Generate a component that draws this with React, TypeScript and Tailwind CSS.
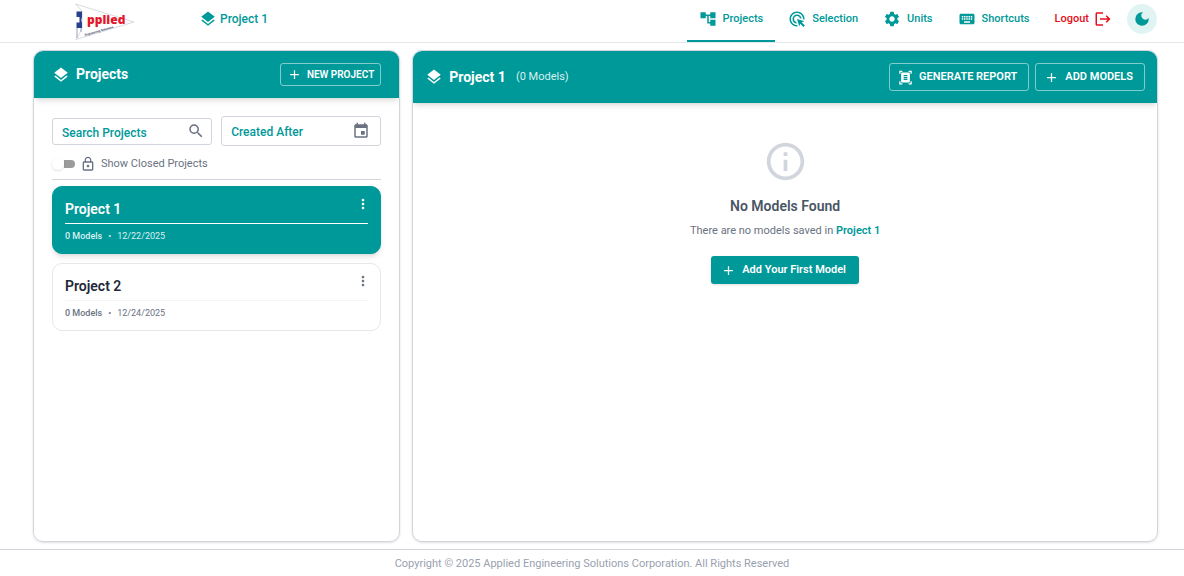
import { useState } from 'react';
import type { IconType } from 'react-icons';
import {
  MdAccountTree,
  MdAdd,
  MdAdsClick,
  MdDarkMode,
  MdDocumentScanner,
  MdEvent,
  MdInfoOutline,
  MdKeyboard,
  MdLayers,
  MdLockOutline,
  MdLogout,
  MdMoreVert,
  MdSearch,
  MdSettings,
} from 'react-icons/md';

interface Project {
  id: number;
  name: string;
  models: number;
  createdOn: string;
}

const projects: Project[] = [
  { id: 1, name: 'Project 1', models: 0, createdOn: '12/22/2025' },
  { id: 2, name: 'Project 2', models: 0, createdOn: '12/24/2025' },
];

const navItems: { label: string; icon: IconType }[] = [
  { label: 'Projects', icon: MdAccountTree },
  { label: 'Selection', icon: MdAdsClick },
  { label: 'Units', icon: MdSettings },
  { label: 'Shortcuts', icon: MdKeyboard },
];

function Logo() {
  return (
    <svg viewBox="0 0 60 38" className="h-[38px] w-[60px]" role="img" aria-label="Applied">
      <path d="M0.5 2 L59 20 L1 37.5 L7 27 L7 9 Z" fill="none" stroke="#cfd0d4" strokeWidth="0.8" />
      <path d="M2 26v10M6 26v4" stroke="#9aa3bd" strokeWidth="1" />
      <path d="M1.5 9.5h5.500v5.500q-1.500 3 0 6v5h-5.500v-5.500h3v-5.500h-3z" fill="#27408b" />
      <text x="12" y="22" fontSize="12" className="fill-[#e3172a] font-['Open_Sans',sans-serif] font-extrabold">
        pplied
      </text>
      <text x="10" y="34" fontSize="3" transform="rotate(-16 10 34)" className="fill-[#3d4668] font-['Roboto',sans-serif] font-bold">
        Engineering Solutions
      </text>
    </svg>
  );
}

function Header() {
  return (
    <header className="flex h-[43px] shrink-0 items-center border-b border-gray-200 pr-[27px] pl-[75px]">
      <Logo />
      <div className="ml-16 flex items-center gap-[3px] pb-1 text-[12px] font-medium text-[#009999]">
        <MdLayers size={18} />
        Project 1
      </div>
      <nav className="ml-auto flex h-full gap-px text-[11px] font-medium">
        {navItems.map(({ label, icon: Icon }) => (
          <a
            key={label}
            href="#"
            className={`flex h-[42px] items-center gap-1.5 border-b-2 px-3 pb-0.5 text-[#009999] ${
              label === 'Projects' ? 'border-[#009999]' : 'border-transparent'
            }`}
          >
            <Icon size={18} />
            {label}
          </a>
        ))}
        <button type="button" className="flex h-[42px] items-center gap-[5px] px-3 pb-1 text-[#e3101c]">
          Logout
          <MdLogout size={18} />
        </button>
      </nav>
      <button
        type="button"
        aria-label="Toggle dark mode"
        className="mb-1 ml-[3px] flex size-[30px] items-center justify-center rounded-full bg-[#e0f4f4] text-[#009999]"
      >
        <MdDarkMode size={18} />
      </button>
    </header>
  );
}

interface ProjectCardProps {
  project: Project;
  selected: boolean;
  onSelect: () => void;
}

function ProjectCard({ project, selected, onSelect }: ProjectCardProps) {
  return (
    <li
      onClick={onSelect}
      className={`h-[68px] rounded-[10px] border px-3 pt-3 ${
        selected ? 'border-[#009999] bg-[#009999] text-white shadow-md' : 'border-gray-200 bg-white text-gray-800'
      }`}
    >
      <div
        className={`flex h-[25px] items-start justify-between border-b ${
          selected ? 'border-white' : 'border-gray-100'
        }`}
      >
        <h3 className="text-[14px] leading-[20px] font-semibold">{project.name}</h3>
        <button
          type="button"
          aria-label={`${project.name} menu`}
          className={`-mt-[3px] -mr-[3px] ${selected ? 'text-white' : 'text-gray-500'}`}
        >
          <MdMoreVert size={16} />
        </button>
      </div>
      <p
        className={`flex gap-1.5 pt-[5px] text-[9px] leading-[14px] ${
          selected ? 'text-[#d9f0f0]' : 'text-gray-500'
        }`}
      >
        <span className="font-medium">{project.models} Models</span>
        <span>•</span>
        <span>{project.createdOn}</span>
      </p>
    </li>
  );
}

function ProjectsPanel({ selectedId, onSelect }: { selectedId: number; onSelect: (id: number) => void }) {
  const [search, setSearch] = useState('');
  const [createdAfter, setCreatedAfter] = useState('');
  const [showClosed, setShowClosed] = useState(false);

  return (
    <section className="flex flex-col overflow-hidden rounded-[10px] border border-gray-300 shadow-sm">
      <div className="flex h-[47px] shrink-0 items-center justify-between bg-[#009999] px-[18px] text-white shadow-md">
        <h2 className="flex items-center gap-1.5 text-[14px] font-bold">
          <MdLayers size={18} />
          Projects
        </h2>
        <button
          type="button"
          className="flex h-[23px] items-center gap-[5px] rounded-[3px] border border-white/50 px-1.5 text-[10px] font-semibold"
        >
          <MdAdd size={15} />
          NEW PROJECT
        </button>
      </div>

      <div className="px-[18px] pt-[18px]">
        <div className="grid grid-cols-2 items-center gap-[9px]">
          <label className="flex h-[27px] items-center rounded-[3px] border border-gray-300 pr-1.5 pl-[9px]">
            <input
              type="text"
              aria-label="Search Projects"
              placeholder="Search Projects"
              value={search}
              onChange={(e) => setSearch(e.target.value)}
              className="w-full min-w-0 pt-1 text-[12px] font-medium text-[#009999] outline-none placeholder:text-[#009999]"
            />
            <MdSearch size={18} className="shrink-0 text-gray-500" />
          </label>
          <label className="flex h-[30px] items-center rounded-[3px] border border-gray-300 pr-[10px] pl-[9px]">
            <input
              type="text"
              aria-label="Created After"
              placeholder="Created After"
              value={createdAfter}
              onChange={(e) => setCreatedAfter(e.target.value)}
              className="w-full min-w-0 pt-px text-[12px] font-medium text-[#009999] outline-none placeholder:text-[#009999]"
            />
            <MdEvent size={18} className="shrink-0 text-gray-500" />
          </label>
        </div>

        <label className="mt-[9px] flex h-[25px] items-start gap-[5px] border-b border-gray-300 text-[11px] leading-[18px] text-gray-500">
          <input
            type="checkbox"
            checked={showClosed}
            onChange={(e) => setShowClosed(e.target.checked)}
            className="peer sr-only"
          />
          <span className="flex h-[18px] w-[23px] items-center peer-checked:flex-row-reverse">
            <span className="z-10 size-3 shrink-0 rounded-full bg-white shadow" />
            <span className="h-2 w-[11px] shrink-0 rounded-r-full bg-[#9b9b9b]" />
          </span>
          <MdLockOutline size={16} className="mt-px" />
          Show Closed Projects
        </label>

        <ul className="mt-1.5 flex flex-col gap-[9px]">
          {projects.map((project) => (
            <ProjectCard
              key={project.id}
              project={project}
              selected={project.id === selectedId}
              onSelect={() => onSelect(project.id)}
            />
          ))}
        </ul>
      </div>
    </section>
  );
}

function ModelsPanel({ project }: { project: Project }) {
  return (
    <section className="flex flex-col overflow-hidden rounded-[10px] border border-gray-300 shadow-sm">
      <div className="flex h-[52px] shrink-0 items-center bg-[#009999] px-3 text-white shadow-md">
        <MdLayers size={18} />
        <h2 className="ml-1.5 text-[14px] font-bold">{project.name}</h2>
        <span className="ml-[10px] text-[11px] text-[#d9f0f0]">({project.models} Models)</span>
        <div className="ml-auto flex gap-1.5 text-[11px] font-semibold">
          <button type="button" className="flex h-7 items-center gap-1.5 rounded-[3px] border border-white/50 pr-[11px] pl-2">
            <MdDocumentScanner size={15} />
            GENERATE REPORT
          </button>
          <button type="button" className="flex h-7 items-center gap-1.5 rounded-[3px] border border-white/50 pr-[11px] pl-2">
            <MdAdd size={15} />
            ADD MODELS
          </button>
        </div>
      </div>

      <div className="flex flex-col items-center pt-9">
        <MdInfoOutline size={45} className="text-gray-300" />
        <h3 className="mt-3 text-[14px] leading-[20px] font-semibold text-gray-600">No Models Found</h3>
        <p className="mt-[7px] text-[11px] leading-[16px] text-gray-500">
          There are no models saved in <span className="font-semibold text-[#009999]">{project.name}</span>
        </p>
        <button
          type="button"
          className="mt-[17px] flex h-7 items-center gap-1.5 rounded-[3px] bg-[#009999] pr-[13px] pl-[10px] text-[11px] font-semibold text-white shadow"
        >
          <MdAdd size={15} />
          Add Your First Model
        </button>
      </div>
    </section>
  );
}

export default function App() {
  const [selectedId, setSelectedId] = useState(1);
  const selected = projects.find((p) => p.id === selectedId) ?? projects[0];

  return (
    <div className="flex h-screen flex-col bg-white font-['Roboto',sans-serif]">
      <Header />
      <main className="grid min-h-0 flex-1 grid-cols-[33fr_67fr] gap-3 pt-[7px] pr-[26px] pb-[7px] pl-[33px]">
        <ProjectsPanel selectedId={selectedId} onSelect={setSelectedId} />
        <ModelsPanel project={selected} />
      </main>
      <footer className="flex h-[27px] shrink-0 items-center justify-center border-t border-gray-300 pt-0.5 text-[11px] text-gray-400">
        Copyright © 2025 Applied Engineering Solutions Corporation. All Rights Reserved
      </footer>
    </div>
  );
}
